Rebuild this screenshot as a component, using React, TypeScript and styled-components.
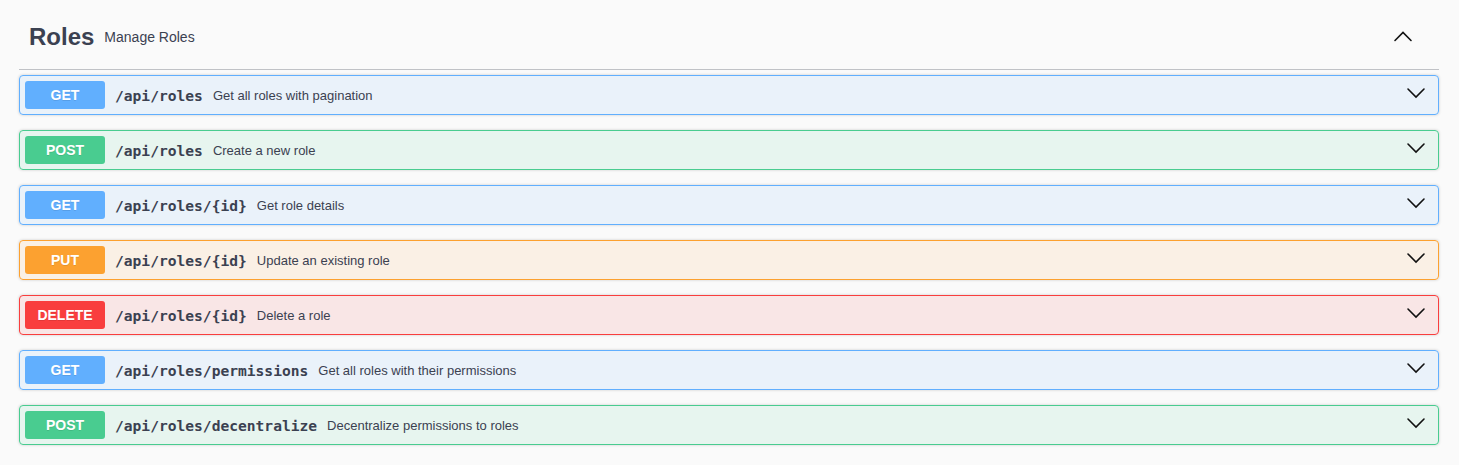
import React from "react";
import styled, { createGlobalStyle } from "styled-components";

const GlobalStyle = createGlobalStyle`
  html, body {
    margin: 0;
    padding: 0;
    background: #fafafa;
    font-family: "Liberation Sans", Arial, sans-serif;
    color: #3b4151;
  }
  * { box-sizing: border-box; }
`;

type Method = "GET" | "POST" | "PUT" | "DELETE";

const palette: Record<Method, string> = {
  GET: "97, 175, 254",
  POST: "73, 204, 144",
  PUT: "252, 161, 48",
  DELETE: "249, 62, 62",
};

const Wrapper = styled.div`
  padding: 0 20px 20px 19px;
`;

const TagHeader = styled.div`
  display: flex;
  align-items: center;
  height: 70px;
  padding: 4px 26px 0 10px;
  border-bottom: 1px solid rgba(59, 65, 81, 0.3);
  margin-bottom: 5px;
`;

const TagTitle = styled.h3`
  margin: 0;
  font-size: 24px;
  font-weight: 700;
  color: #3b4151;
  font-family: "Liberation Sans", Arial, sans-serif;
`;

const TagDesc = styled.small`
  flex: 1;
  padding: 0 10px;
  font-size: 14px;
  color: #3b4151;
`;

const ArrowBtn = styled.span`
  display: flex;
  width: 20px;
  height: 20px;
  color: #111;
`;

const List = styled.div`
  display: flex;
  flex-direction: column;
  gap: 15px;
`;

const Block = styled.div<{ $rgb: string }>`
  display: flex;
  align-items: center;
  height: 40px;
  padding: 5px 12px 5px 5px;
  border: 1px solid rgb(${(p) => p.$rgb});
  border-radius: 4px;
  background: rgba(${(p) => p.$rgb}, 0.1);
  box-shadow: 0 0 3px rgba(0, 0, 0, 0.19);
`;

const Badge = styled.span<{ $rgb: string }>`
  display: flex;
  align-items: center;
  justify-content: center;
  width: 80px;
  height: 28px;
  border-radius: 3px;
  background: rgb(${(p) => p.$rgb});
  color: #fff;
  font-size: 14px;
  font-weight: 700;
  text-shadow: 0 1px 0 rgba(0, 0, 0, 0.1);
`;

const Path = styled.span`
  padding: 0 10px;
  font-family: "DejaVu Sans Mono", "Liberation Mono", monospace;
  font-size: 14.6px;
  font-weight: 700;
  color: #3b4151;
`;

const Desc = styled.span`
  flex: 1;
  font-size: 13px;
  color: #3b4151;
`;

const Chevron = ({ up }: { up?: boolean }) => (
  <svg width="20" height="20" viewBox="0 0 20 20">
    <polyline
      fill="none"
      stroke="currentColor"
      strokeWidth="1.6"
      strokeLinecap="round"
      strokeLinejoin="miter"
      points={up ? "2,13.5 10,5.5 18,13.5" : "2,4 10,12 18,4"}
    />
  </svg>
);

const ops: { method: Method; path: string; desc: string }[] = [
  { method: "GET", path: "/api/roles", desc: "Get all roles with pagination" },
  { method: "POST", path: "/api/roles", desc: "Create a new role" },
  { method: "GET", path: "/api/roles/{id}", desc: "Get role details" },
  { method: "PUT", path: "/api/roles/{id}", desc: "Update an existing role" },
  { method: "DELETE", path: "/api/roles/{id}", desc: "Delete a role" },
  { method: "GET", path: "/api/roles/permissions", desc: "Get all roles with their permissions" },
  { method: "POST", path: "/api/roles/decentralize", desc: "Decentralize permissions to roles" },
];

export default function App() {
  return (
    <>
      <GlobalStyle />
      <Wrapper>
        <TagHeader>
          <TagTitle>Roles</TagTitle>
          <TagDesc>Manage Roles</TagDesc>
          <ArrowBtn>
            <Chevron up />
          </ArrowBtn>
        </TagHeader>
        <List>
          {ops.map((op, i) => (
            <Block key={i} $rgb={palette[op.method]}>
              <Badge $rgb={palette[op.method]}>{op.method}</Badge>
              <Path>{op.path}</Path>
              <Desc>{op.desc}</Desc>
              <ArrowBtn>
                <Chevron />
              </ArrowBtn>
            </Block>
          ))}
        </List>
      </Wrapper>
    </>
  );
}
